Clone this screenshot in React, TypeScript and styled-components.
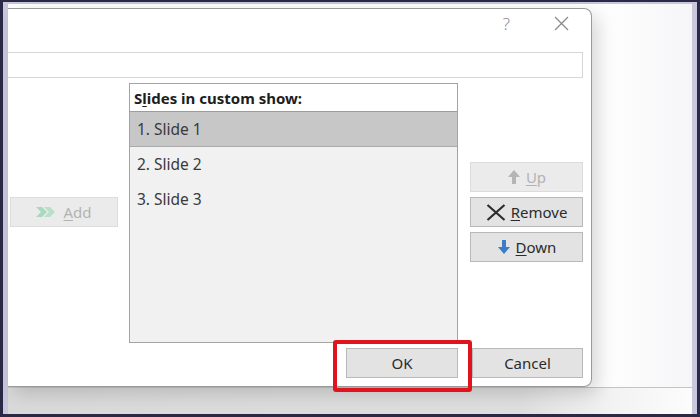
import React from 'react';
import styled, { createGlobalStyle } from 'styled-components';

const GlobalStyle = createGlobalStyle`
  html, body {
    margin: 0;
    padding: 0;
    background: #2a2946;
  }
  body {
    font-family: "Noto Sans", "Open Sans", Arial, sans-serif;
  }
`;

// outer screenshot frame (dark edge + lavender window border)
const Frame = styled.div`
  width: 700px;
  height: 417px;
  box-sizing: border-box;
  background: #2a2946;
  padding: 2px 3px 3px 3px;
`;

const FrameInner = styled.div`
  height: 100%;
  box-sizing: border-box;
  background: #c9c7dd;
  padding: 2px 5px 0 5px;
`;

const Desktop = styled.div`
  height: 100%;
  display: flex;
  flex-direction: column;
  background: linear-gradient(90deg, #ffffff 0%, #ffffff 85%, #f6f6f8 100%);
`;

const Stage = styled.div`
  flex: 1;
  display: flex;
  align-items: flex-start;
  padding-top: 4px;
`;

const Backdrop = styled.div`
  height: 27px;
  background: linear-gradient(90deg, #d9d9d9 0%, #dedede 75%, #f2f2f2 88%, #fcfcfc 100%);
  border-top: 1px solid #c4c4c4;
`;

const Dialog = styled.div`
  position: relative;
  z-index: 1;
  width: 584px;
  height: 379px;
  box-sizing: border-box;
  background: #ffffff;
  border: 1px solid #9a9a9a;
  border-left: none;
  border-radius: 0 8px 8px 0;
  box-shadow: 6px 6px 18px rgba(0, 0, 0, 0.16);
  display: flex;
  flex-direction: column;
`;

const TitleBar = styled.div`
  height: 29px;
  display: flex;
  justify-content: flex-end;
  align-items: center;
  gap: 44px;
  padding-right: 22px;
`;

const TitleIcon = styled.span`
  color: #8a8a8a;
  font-size: 17px;
  font-weight: 300;
  line-height: 1;
  display: flex;
  align-items: center;
`;

const NameField = styled.div`
  margin: 14px 8px 0 0;
  height: 26px;
  box-sizing: border-box;
  border: 1px solid #d6d6d6;
  border-left: none;
  background: #fff;
`;

const Body = styled.div`
  margin-top: 5px;
  display: grid;
  grid-template-columns: 121px 329px 125px;
  height: 260px;
`;

const LeftCol = styled.div`
  padding: 114px 0 0 2px;
`;

const RightCol = styled.div`
  padding: 79px 0 0 12px;
  display: flex;
  flex-direction: column;
  gap: 5px;
`;

const Button = styled.div<{ $disabled?: boolean; $width?: number }>`
  height: 30px;
  width: ${({ $width }) => ($width ? `${$width}px` : 'auto')};
  box-sizing: border-box;
  display: flex;
  align-items: center;
  justify-content: center;
  gap: 5px;
  font-size: 15px;
  color: ${({ $disabled }) => ($disabled ? '#b3b3b3' : '#2b2b2b')};
  background: ${({ $disabled }) => ($disabled ? '#ebebeb' : '#e3e3e3')};
  border: 1px solid ${({ $disabled }) => ($disabled ? '#dcdcdc' : '#b9b9b9')};
  position: relative;
`;

const Key = styled.span`
  text-decoration: underline;
  text-underline-offset: 2px;
`;

const ListBox = styled.div`
  border: 1px solid #a3a3a3;
  background: #f1f1f1;
  display: flex;
  flex-direction: column;
`;

const ListHeader = styled.div`
  height: 27px;
  background: #fff;
  border-bottom: 1px solid #9c9c9c;
  font-size: 15px;
  font-weight: 700;
  color: #1d1d1d;
  display: flex;
  align-items: center;
  padding-left: 4px;
`;

const ListRow = styled.div<{ $selected?: boolean }>`
  height: 35px;
  box-sizing: border-box;
  display: flex;
  align-items: center;
  padding-left: 7px;
  font-size: 15.5px;
  color: #3a3a3a;
  background: ${({ $selected }) => ($selected ? '#c7c7c7' : 'transparent')};
  border-bottom: 1px solid ${({ $selected }) => ($selected ? '#a9a9a9' : 'transparent')};
`;

const Footer = styled.div`
  margin-top: 5px;
  display: flex;
  justify-content: flex-end;
  gap: 14px;
  padding-right: 8px;
`;

const Highlight = styled.div`
  position: absolute;
  left: -14px;
  top: -9px;
  right: -15px;
  bottom: -15px;
  border: 4px solid #e0141d;
  border-radius: 3px;
  pointer-events: none;
`;

const CloseIcon = () => (
  <svg width="15" height="15" viewBox="0 0 15 15">
    <path d="M1 1 L14 14 M14 1 L1 14" stroke="#8a8a8a" strokeWidth="1.3" fill="none" />
  </svg>
);

const AddIcon = () => (
  <svg width="22" height="12" viewBox="0 0 22 12">
    <path d="M0 1 H6 L11 6 L6 11 H0 L5 6 Z" fill="#a9d8bf" />
    <path d="M8 1 H14 L19 6 L14 11 H8 L13 6 Z" fill="#b9dfcb" />
  </svg>
);

const UpIcon = () => (
  <svg width="14" height="16" viewBox="0 0 14 16">
    <path d="M7 1 L13 8 H9 V15 H5 V8 H1 Z" fill="#b5b5b5" />
  </svg>
);

const DownIcon = () => (
  <svg width="14" height="16" viewBox="0 0 14 16">
    <path d="M7 15 L13 8 H9 V1 H5 V8 H1 Z" fill="#3b7dc4" />
  </svg>
);

const RemoveIcon = () => (
  <svg width="20" height="17" viewBox="0 0 20 17">
    <path d="M1.5 1 L18.5 16 M18.5 1 L1.5 16" stroke="#2d2d2d" strokeWidth="2.2" fill="none" />
  </svg>
);

const slides = ['1. Slide 1', '2. Slide 2', '3. Slide 3'];

export default function App() {
  return (
    <>
      <GlobalStyle />
      <Frame>
        <FrameInner>
          <Desktop>
            <Stage>
              <Dialog>
                <TitleBar>
                  <TitleIcon>?</TitleIcon>
                  <TitleIcon>
                    <CloseIcon />
                  </TitleIcon>
                </TitleBar>
                <NameField />
                <Body>
                  <LeftCol>
                    <Button $disabled $width={108}>
                      <AddIcon />
                      <span>
                        <Key>A</Key>dd
                      </span>
                    </Button>
                  </LeftCol>
                  <ListBox>
                    <ListHeader>
                      <span>
                        S<Key>l</Key>ides in custom show:
                      </span>
                    </ListHeader>
                    {slides.map((s, i) => (
                      <ListRow key={s} $selected={i === 0}>
                        {s}
                      </ListRow>
                    ))}
                  </ListBox>
                  <RightCol>
                    <Button $disabled>
                      <UpIcon />
                      <span>
                        <Key>U</Key>p
                      </span>
                    </Button>
                    <Button>
                      <RemoveIcon />
                      <span>
                        <Key>R</Key>emove
                      </span>
                    </Button>
                    <Button>
                      <DownIcon />
                      <span>
                        <Key>D</Key>own
                      </span>
                    </Button>
                  </RightCol>
                </Body>
                <Footer>
                  <Button $width={112}>
                    OK
                    <Highlight />
                  </Button>
                  <Button $width={111}>Cancel</Button>
                </Footer>
              </Dialog>
            </Stage>
            <Backdrop />
          </Desktop>
        </FrameInner>
      </Frame>
    </>
  );
}
